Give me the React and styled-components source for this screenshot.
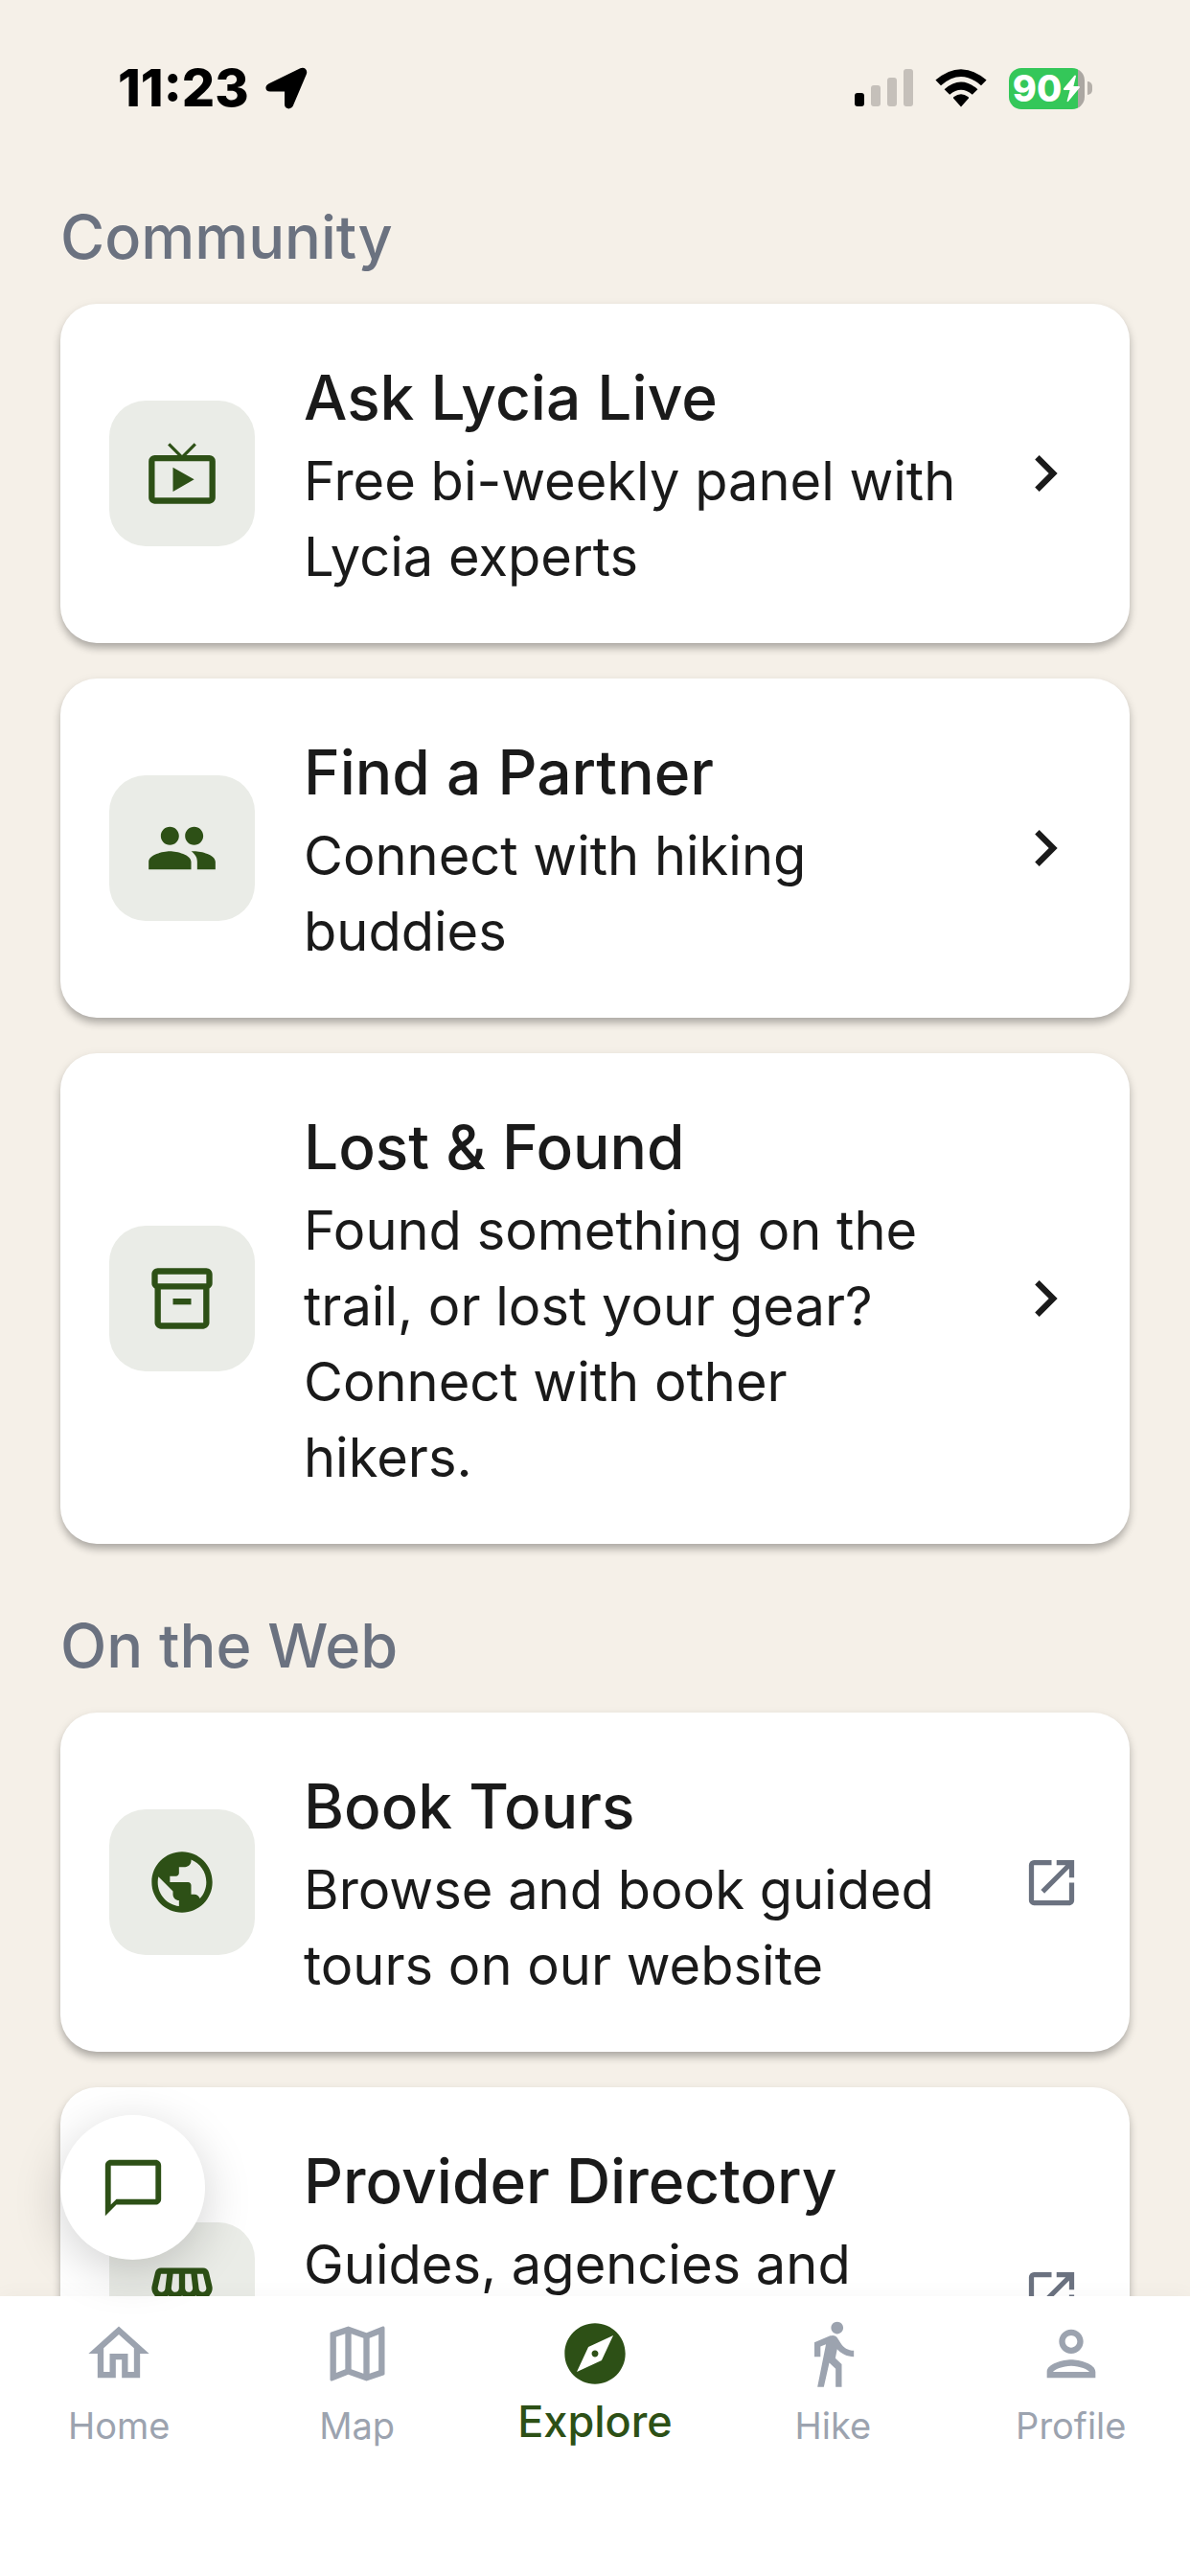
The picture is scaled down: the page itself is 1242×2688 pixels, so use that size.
import React, { useState } from 'react';
import styled, { createGlobalStyle } from 'styled-components';
import {
  MdChatBubbleOutline,
  MdChevronRight,
  MdDirectionsWalk,
  MdExplore,
  MdLiveTv,
  MdOpenInNew,
  MdOutlineHome,
  MdOutlineInventory2,
  MdOutlineMap,
  MdOutlinePerson,
  MdOutlineStorefront,
  MdPeople,
  MdPublic,
} from 'react-icons/md';

const communityItems = [
  {
    icon: MdLiveTv,
    title: 'Ask Lycia Live',
    text: 'Free bi-weekly panel with Lycia experts',
  },
  {
    icon: MdPeople,
    title: 'Find a Partner',
    text: 'Connect with hiking buddies',
  },
  {
    icon: MdOutlineInventory2,
    title: 'Lost & Found',
    text: 'Found something on the trail, or lost your gear? Connect with other hikers.',
  },
];

const webItems = [
  {
    icon: MdPublic,
    title: 'Book Tours',
    text: 'Browse and book guided tours on our website',
  },
  {
    icon: MdOutlineStorefront,
    title: 'Provider Directory',
    text: 'Guides, agencies and',
    lines: 3,
  },
];

const tabs = [
  { label: 'Home', icon: MdOutlineHome },
  { label: 'Map', icon: MdOutlineMap },
  { label: 'Explore', icon: MdExplore },
  { label: 'Hike', icon: MdDirectionsWalk },
  { label: 'Profile', icon: MdOutlinePerson },
];

const LocationArrow = () => (
  <svg width="44" height="44" viewBox="0 0 44 44" aria-hidden="true">
    <path
      d="M3.6 17.2 36.4 1.2C40.6-.8 44.6 3 42.8 7.4L28.8 40.6C26.8 45 20 44 20 39V25.4H5C-.4 25.4-1.2 19.6 3.6 17.2Z"
      fill="#000"
    />
  </svg>
);

const Signal = () => (
  <svg width="61" height="40" viewBox="0 0 61 40" aria-hidden="true">
    <rect x="0" y="25" width="10" height="14" rx="3" fill="#000" />
    <rect x="17" y="17" width="10" height="22" rx="3" fill="#c5c0ba" />
    <rect x="34" y="9" width="10" height="30" rx="3" fill="#c5c0ba" />
    <rect x="51" y="0" width="10" height="39" rx="3" fill="#c5c0ba" />
  </svg>
);

const Wifi = () => (
  <svg width="54" height="40" viewBox="0 0 54 40" aria-hidden="true">
    <path d="M27 39.5 19 30.6Q18.6 29.6 19.6 28.9Q27 23.6 34.4 28.9Q35.4 29.6 35 30.6Z" />
    <path d="M9.6 21.2Q27 5.8 44.4 21.2L38.8 26.8Q27 16.6 15.2 26.8Z" />
    <path d="M.4 11.6Q27-11.2 53.6 11.6L48 17.2Q27-1.2 6 17.2Z" />
  </svg>
);

const Bolt = () => (
  <svg width="19" height="29" viewBox="0 0 19 29" aria-hidden="true">
    <path
      d="M12.4.8 1 14.6Q.4 15.8 1.8 16H7.6L4.6 27.4Q4.8 28.8 6 27.8L17.8 13.4Q18.4 12.2 17 12H11.4L14 1.6Q13.8.2 12.4.8Z"
      fill="#fff"
    />
  </svg>
);

const LinkCard = ({ item, external }) => {
  const Icon = item.icon;
  return (
    <Card
      as={external ? 'a' : 'button'}
      href={external ? '#' : undefined}
      type={external ? undefined : 'button'}
    >
      <IconTile>
        <Icon size={76} />
      </IconTile>
      <CardBody>
        <CardTitle>{item.title}</CardTitle>
        <CardText $lines={item.lines}>{item.text}</CardText>
      </CardBody>
      <CardAction $muted={external}>
        {external ? <MdOpenInNew size={63} /> : <MdChevronRight size={76} />}
      </CardAction>
    </Card>
  );
};

const App = () => {
  const [active, setActive] = useState('Explore');

  return (
    <>
      <GlobalStyle />
      <Screen>
        <StatusBar>
          <StatusGroup $gap={17}>
            <Time>11:23</Time>
            <LocationArrow />
          </StatusGroup>
          <StatusGroup $gap={23}>
            <Signal />
            <Wifi />
            <Battery>
              <BatteryBody>
                90
                <Bolt />
              </BatteryBody>
              <BatteryCap />
            </Battery>
          </StatusGroup>
        </StatusBar>
        <Content>
          <Section>
            <SectionTitle>Community</SectionTitle>
            <CardList>
              {communityItems.map((item) => (
                <LinkCard key={item.title} item={item} />
              ))}
            </CardList>
          </Section>
          <Section>
            <SectionTitle>On the Web</SectionTitle>
            <CardList>
              {webItems.map((item) => (
                <LinkCard key={item.title} item={item} external />
              ))}
            </CardList>
          </Section>
        </Content>
        <BottomArea>
          <ChatButton type="button" aria-label="Chat">
            <MdChatBubbleOutline size={70} />
          </ChatButton>
          <TabBar>
            {tabs.map(({ label, icon: Icon }) => (
              <Tab
                key={label}
                href="#"
                $active={label === active}
                onClick={() => setActive(label)}
              >
                <Icon size={76} />
                <TabLabel $active={label === active}>{label}</TabLabel>
              </Tab>
            ))}
          </TabBar>
        </BottomArea>
      </Screen>
    </>
  );
};

const GlobalStyle = createGlobalStyle`
  * {
    box-sizing: border-box;
  }
  body {
    margin: 0;
    background: #f5f0e8;
    font-family: Inter, "Liberation Sans", sans-serif;
  }
  svg {
    display: block;
    flex-shrink: 0;
  }
`;

const Screen = styled.div`
  display: flex;
  flex-direction: column;
  height: 100vh;
  overflow: hidden;
`;

const StatusBar = styled.header`
  display: flex;
  align-items: center;
  justify-content: space-between;
  flex-shrink: 0;
  height: 184px;
  padding: 0 102px 0 123px;
`;

const StatusGroup = styled.div`
  display: flex;
  align-items: center;
  gap: ${({ $gap }) => $gap}px;
`;

const Time = styled.time`
  font-size: 54px;
  font-weight: 800;
  line-height: 60px;
  color: #000;
`;

const Battery = styled.div`
  display: flex;
  align-items: center;
  gap: 3px;
`;

const BatteryBody = styled.div`
  display: flex;
  align-items: center;
  justify-content: center;
  gap: 1px;
  width: 79px;
  height: 43px;
  border-radius: 13px;
  background: linear-gradient(to right, #34c759 91%, #aba7a2 91%);
  color: #fff;
  font-size: 38px;
  font-weight: 800;
  line-height: 43px;
`;

const BatteryCap = styled.div`
  width: 5px;
  height: 14px;
  border-radius: 0 5px 5px 0;
  background: #b5b0aa;
`;

const Content = styled.main`
  flex: 1;
  min-height: 0;
  padding: 15px 63px 0;
  overflow-y: auto;
  scrollbar-width: none;
`;

const Section = styled.section`
  margin-bottom: 58px;
`;

const SectionTitle = styled.h2`
  margin: 0 0 22px;
  font-size: 63px;
  font-weight: 500;
  line-height: 96px;
  color: #6b7280;
`;

const CardList = styled.div`
  display: flex;
  flex-direction: column;
  gap: 37px;
`;

const Card = styled.button`
  display: flex;
  align-items: center;
  gap: 51px;
  width: 100%;
  padding: 50px 50px 50px 51px;
  border: none;
  border-radius: 38px;
  background: #fff;
  box-shadow:
    0 6px 8px -1px rgb(0 0 0 / 26%),
    0 3px 12px rgb(0 0 0 / 8%);
  color: #1a1a1a;
  font-family: inherit;
  text-align: left;
  text-decoration: none;
  cursor: pointer;
`;

const IconTile = styled.span`
  display: flex;
  align-items: center;
  justify-content: center;
  flex-shrink: 0;
  width: 152px;
  height: 152px;
  border-radius: 38px;
  background: #eaece7;
  color: #2d5016;
`;

const CardBody = styled.span`
  display: flex;
  flex-direction: column;
  flex: 1;
  min-width: 0;
`;

const CardTitle = styled.span`
  font-size: 64px;
  font-weight: 500;
  line-height: 96px;
`;

const CardText = styled.span`
  min-height: ${({ $lines = 1 }) => $lines * 79}px;
  font-size: 56px;
  font-weight: 400;
  line-height: 79px;
`;

const CardAction = styled.span`
  color: ${({ $muted }) => ($muted ? '#6b7280' : '#1a1a1a')};
`;

const BottomArea = styled.footer`
  position: relative;
  flex-shrink: 0;
`;

const ChatButton = styled.button`
  position: absolute;
  bottom: calc(100% + 38px);
  left: 63px;
  display: flex;
  align-items: center;
  justify-content: center;
  width: 151px;
  height: 151px;
  padding: 0;
  border: none;
  border-radius: 50%;
  background: #fff;
  box-shadow: 0 12px 50px rgb(0 0 0 / 18%);
  color: #2d5016;
  cursor: pointer;
`;

const TabBar = styled.nav`
  display: grid;
  grid-template-columns: repeat(5, 1fr);
  padding: 22px 0 126px;
  background: #fff;
  box-shadow: 0 -2px 20px rgb(0 0 0 / 3%);
`;

const Tab = styled.a`
  display: flex;
  flex-direction: column;
  align-items: center;
  gap: 6px;
  color: ${({ $active }) => ($active ? '#2d5016' : '#9ca3af')};
  text-decoration: none;
`;

const TabLabel = styled.span`
  font-size: ${({ $active }) => ($active ? 45 : 38)}px;
  font-weight: ${({ $active }) => ($active ? 500 : 400)};
  line-height: ${({ $active }) => ($active ? 54 : 62)}px;
`;

export default App;
